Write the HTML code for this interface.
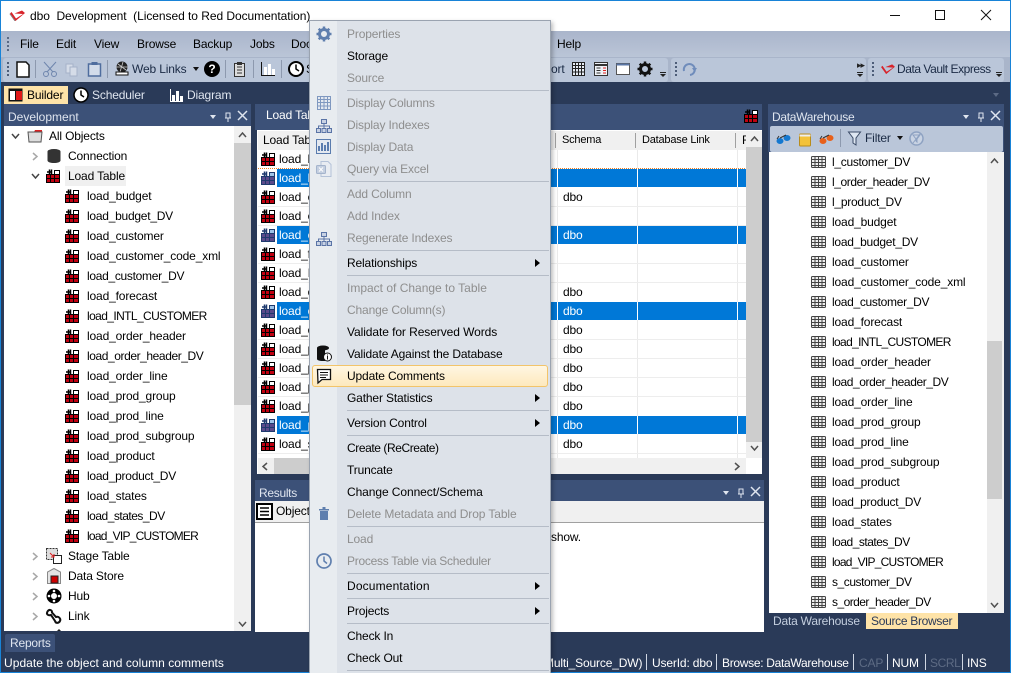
<!DOCTYPE html>
<html><head><meta charset="utf-8"><style>
html,body{margin:0;padding:0;width:1011px;height:673px;overflow:hidden}
body{background:#2a3a58;font:12px "Liberation Sans",sans-serif;color:#000;letter-spacing:-.15px}
#r{position:absolute;left:0;top:0;width:1011px;height:673px;overflow:hidden}
.b{position:absolute}
.t{position:absolute;white-space:nowrap;line-height:16px;height:16px}
svg{position:absolute;overflow:visible}
.w{color:#fff}.l{color:#dfe5ef}
.d{color:#8e8e8e}
.v{letter-spacing:-.42px}
.c{letter-spacing:-.7px}
.s{position:absolute;left:347px;width:202px;height:1px;background:#b5bcc7}
.a{position:absolute;left:535px;width:0;height:0;border-left:5px solid #000;border-top:4px solid transparent;border-bottom:4px solid transparent}
</style></head><body><div id="r">
<svg width="0" height="0" style="position:absolute"><defs>
<symbol id="lt" viewBox="0 0 14 14"><rect x="0" y="5" width="14" height="9" fill="#000"/><rect x="8" y="1" width="6" height="5" fill="#000"/><rect x="9" y="2" width="4" height="3" fill="#fff"/><path d="M1 3h4M3.500 .5v5M5.500 .5v5" stroke="#000" stroke-width="1.500" fill="none"/><path d="M1 6h3v3H1zM5 6h3v3H5zM9 6h4v3H9zM1 10h3v3H1zM5 10h3v3H5zM9 10h4v3H9z" fill="#c00010"/></symbol>
<symbol id="ls" viewBox="0 0 14 14"><rect x="0" y="5" width="14" height="9" fill="#1e3a6e"/><rect x="8" y="1" width="6" height="5" fill="#1e3a6e"/><rect x="9" y="2" width="4" height="3" fill="#9fc4e8"/><path d="M1 3h4M3.500 .5v5M5.500 .5v5" stroke="#1e3a6e" stroke-width="1.500" fill="none"/><path d="M1 6h3v3H1zM5 6h3v3H5zM9 6h4v3H9zM1 10h3v3H1zM5 10h3v3H5zM9 10h4v3H9z" fill="#5a4a8a"/></symbol>
<symbol id="tb" viewBox="0 0 15 12"><rect x=".5" y=".5" width="14" height="11" rx="1" fill="#eee" stroke="#444"/><path d="M.5 3.500h14M.5 6.500h14M.5 9.500h14M4 .5v11M7.500 .5v11M11 .5v11" stroke="#444" stroke-width="1" fill="none"/></symbol>
<symbol id="org" viewBox="0 0 16 16"><path d="M5.500 1.500h5v4h-5zM.5 10.500h4v4h-4zM6 10.500h4v4H6zM11.500 10.500h4v4h-4z" fill="#c8d2e4" stroke="#5a74a6"/><path d="M8 5.500v5M2.500 10.500V8h11v2.500" fill="none" stroke="#5a74a6"/></symbol>
</defs></svg>

<!-- window frame / title -->
<div class="b" style="left:0;top:0;width:1011px;height:31px;background:#fff"></div>
<div class="b" style="left:0;top:0;width:1011px;height:1px;background:#1883d7"></div>
<svg style="left:9px;top:9px" width="17" height="13" viewBox="0 0 17 13"><path d="M1 4.500L2.500 3 7 9.500 14 5 5.500 4.500 13 1.500 16 4 6.500 12z" fill="#d8232a"/><path d="M1 4.500L6.500 12 5.500 12 .5 5z" fill="#777"/></svg>
<div class="t" style="left:30px;top:8px;letter-spacing:-.05px">dbo&nbsp; Development&nbsp; (Licensed to Red Documentation)</div>
<div class="b" style="left:890px;top:15px;width:10px;height:1px;background:#111"></div>
<div class="b" style="left:935px;top:10px;width:8px;height:8px;border:1px solid #111"></div>
<svg style="left:981px;top:10px" width="10" height="10"><path d="M0 0l10 10M10 0L0 10" stroke="#111" stroke-width="1" fill="none"/></svg>

<!-- menu bar -->
<div class="b" style="left:1px;top:31px;width:1009px;height:26px;background:linear-gradient(#aab5cb,#bac5d7)"></div>
<div class="b" style="left:7px;top:37px;width:2px;height:14px;background:repeating-linear-gradient(#5a6a85 0 2px,transparent 2px 4px)"></div>
<div class="t" style="left:20px;top:36px">File</div>
<div class="t" style="left:56px;top:36px">Edit</div>
<div class="t" style="left:94px;top:36px">View</div>
<div class="t" style="left:137px;top:36px">Browse</div>
<div class="t" style="left:193px;top:36px">Backup</div>
<div class="t" style="left:250px;top:36px">Jobs</div>
<div class="t" style="left:291px;top:36px">Doc</div>
<div class="t" style="left:557px;top:36px">Help</div>

<!-- toolbars -->
<div class="b" style="left:1px;top:57px;width:1009px;height:25px;background:#a9b5ca"></div>
<div class="b" style="left:3px;top:58px;width:665px;height:24px;background:#bac6d9;border-radius:3px"></div>
<div class="b" style="left:671px;top:58px;width:195px;height:24px;background:#bac6d9;border-radius:3px"></div>
<div class="b" style="left:868px;top:58px;width:136px;height:24px;background:#bac6d9;border-radius:3px"></div>
<div class="b" style="left:7px;top:62px;width:2px;height:14px;background:repeating-linear-gradient(#4d5d78 0 2px,transparent 2px 4px)"></div>
<svg style="left:16px;top:61px" width="14" height="17"><path d="M1 1h9l3 3v12H1z" fill="#fff" stroke="#111" stroke-width="1.500"/></svg>
<div class="b" style="left:35px;top:60px;width:1px;height:18px;background:#8d99ae"></div>
<svg style="left:43px;top:62px" width="14" height="15"><path d="M1 0l9 10M13 0L4 10" stroke="#6f86ad" fill="none"/><circle cx="3" cy="12" r="2.500" fill="none" stroke="#6f86ad"/><circle cx="11" cy="12" r="2.500" fill="none" stroke="#6f86ad"/></svg>
<svg style="left:65px;top:63px" width="14" height="14"><path d="M1 1h7v9H1z" fill="#d5dce8" stroke="#a5b2c9"/><path d="M5 4h7v9H5z" fill="#d5dce8" stroke="#a5b2c9"/></svg>
<svg style="left:88px;top:62px" width="13" height="15"><rect x=".5" y="2" width="12" height="12" fill="#d3dcea" stroke="#4f6d9e" stroke-width="1.500"/><rect x="3.500" y="0" width="6" height="3" fill="#4f6d9e"/></svg>
<div class="b" style="left:107px;top:60px;width:1px;height:18px;background:#8d99ae"></div>
<svg style="left:115px;top:61px" width="14" height="16"><circle cx="7" cy="6" r="5.500" fill="#222"/><path d="M3 3l8 6M8 1l-3 10M1 6h12" stroke="#ccc" stroke-width=".8"/><path d="M1 11h12v3H1z" fill="#fff" stroke="#111"/></svg>
<div class="t" style="left:132px;top:61px;color:#1a2a44">Web Links</div>
<div class="b" style="left:193px;top:67px;border-top:4px solid #111;border-left:3.500px solid transparent;border-right:3.500px solid transparent"></div>
<div class="b" style="left:204px;top:61px;width:16px;height:16px;border-radius:50%;background:#000;color:#fff;font:bold 12px/16px 'Liberation Sans';text-align:center;letter-spacing:0">?</div>
<div class="b" style="left:225px;top:60px;width:1px;height:18px;background:#8d99ae"></div>
<svg style="left:234px;top:62px" width="12" height="15"><rect x=".5" y="1.500" width="10" height="13" fill="#ddd" stroke="#333"/><path d="M3 5h5M3 8h5M3 11h5" stroke="#333"/><rect x="3" y="0" width="5" height="3" fill="#333"/></svg>
<div class="b" style="left:253px;top:60px;width:1px;height:18px;background:#8d99ae"></div>
<svg style="left:261px;top:62px" width="14" height="14"><path d="M.5 0v13.500H14" stroke="#111" fill="none"/><rect x="3" y="5" width="3" height="8" fill="#fff"/><rect x="7" y="2" width="3" height="11" fill="#fff"/><rect x="11" y="7" width="3" height="6" fill="#fff"/></svg>
<div class="b" style="left:281px;top:60px;width:1px;height:18px;background:#8d99ae"></div>
<svg style="left:288px;top:61px" width="16" height="16"><circle cx="8" cy="8" r="7" fill="#fff" stroke="#000" stroke-width="2"/><path d="M8 3.500V8l3 2" stroke="#000" fill="none" stroke-width="1.500"/></svg>
<div class="t" style="left:306px;top:61px">S</div>
<div class="t" style="left:551px;top:61px;color:#1a2a44">ort</div>
<svg style="left:572px;top:62px" width="13" height="14"><path d="M.5 .5h12v13H.5zM.5 3.500h12M.5 6.500h12M.5 10h12M3.500 .5v13M6.500 .5v13M9.500 .5v13" fill="#e8edf5" stroke="#222"/></svg>
<svg style="left:594px;top:62px" width="14" height="14"><rect x=".5" y=".5" width="13" height="13" fill="#eef1f6" stroke="#333"/><path d="M.5 3h13" stroke="#333" stroke-width="2"/><path d="M2.500 6h4M2.500 8.500h4M2.500 11h4" stroke="#333"/><path d="M9 6h3M9 8.500h3M9 11h3" stroke="#d22"/></svg>
<svg style="left:616px;top:63px" width="14" height="12"><rect x=".5" y=".5" width="13" height="11" fill="#fff" stroke="#555"/><path d="M.5 1.500h13" stroke="#5a76a6" stroke-width="2"/></svg>
<svg style="left:637px;top:61px" width="16" height="16" viewBox="0 0 16 16"><circle cx="8" cy="8" r="4.500" fill="none" stroke="#111" stroke-width="3"/><path d="M8 .5v3M8 12.500v3M.5 8h3M12.500 8h3M2.700 2.700l2.100 2.100M11.200 11.200l2.100 2.100M13.300 2.700l-2.100 2.100M4.800 11.200l-2.100 2.100" stroke="#111" stroke-width="2.500"/></svg>
<div class="b" style="left:660px;top:72px;width:6px;height:1px;background:#222"></div>
<div class="b" style="left:660px;top:74px;border-top:3px solid #222;border-left:3px solid transparent;border-right:3px solid transparent"></div>
<div class="b" style="left:675px;top:62px;width:2px;height:14px;background:repeating-linear-gradient(#4d5d78 0 2px,transparent 2px 4px)"></div>
<svg style="left:682px;top:62px" width="15" height="15"><path d="M2 9A5.500 5.500 0 1 1 8 13" fill="none" stroke="#6f8cbb" stroke-width="2"/><path d="M10 6h5l-2.500 4z" fill="#6f8cbb"/></svg>
<div class="b" style="left:857px;top:60px;color:#222;font-size:9px;line-height:10px;letter-spacing:-1px">▸▸</div>
<div class="b" style="left:857px;top:72px;width:6px;height:1px;background:#222"></div>
<div class="b" style="left:857px;top:74px;border-top:3px solid #222;border-left:3px solid transparent;border-right:3px solid transparent"></div>
<div class="b" style="left:872px;top:62px;width:2px;height:14px;background:repeating-linear-gradient(#4d5d78 0 2px,transparent 2px 4px)"></div>
<svg style="left:880px;top:63px" width="16" height="12" viewBox="0 0 17 13"><path d="M1 4.500L2.500 3 7 9.500 14 5 5.500 4.500 13 1.500 16 4 6.500 12z" fill="#d8232a"/></svg>
<div class="t" style="left:897px;top:61px;color:#1a2a44;letter-spacing:-.45px">Data Vault Express</div>
<div class="b" style="left:996px;top:72px;width:6px;height:1px;background:#222"></div>
<div class="b" style="left:996px;top:74px;border-top:3px solid #222;border-left:3px solid transparent;border-right:3px solid transparent"></div>

<!-- tab strip -->
<div class="b" style="left:4px;top:86px;width:64px;height:18px;background:#fee3a8"></div>
<svg style="left:8px;top:88px" width="15" height="14"><rect x=".5" y=".5" width="14" height="13" fill="#111"/><rect x="2" y="3" width="5" height="9" fill="#fff"/><rect x="8" y="3" width="6" height="9" fill="#e01818"/></svg>
<div class="t" style="left:27px;top:87px">Builder</div>
<svg style="left:73px;top:87px" width="16" height="16"><circle cx="8" cy="8" r="7" fill="#fff" stroke="#000" stroke-width="1.500"/><path d="M8 3.500V8l3 2" stroke="#000" fill="none" stroke-width="1.500"/></svg>
<div class="t l" style="left:92px;top:87px">Scheduler</div>
<svg style="left:170px;top:89px" width="13" height="13"><path d="M.5 0v12.500H13" stroke="#fff" fill="none"/><rect x="2" y="6" width="3" height="6" fill="#fff"/><rect x="6" y="2" width="3" height="10" fill="#fff"/><rect x="10" y="7" width="3" height="5" fill="#fff"/></svg>
<div class="t l" style="left:187px;top:87px">Diagram</div>
<div class="b" style="left:993px;top:93px;border-top:4px solid #5c6a85;border-left:3.500px solid transparent;border-right:3.500px solid transparent"></div>

<!-- Development panel -->
<div class="b" style="left:4px;top:104px;width:247px;height:22px;background:#3c5178"></div>
<div class="t l" style="left:8px;top:109px;letter-spacing:0">Development</div>
<div class="b" style="left:210px;top:115px;border-top:4px solid #dfe5ef;border-left:3.500px solid transparent;border-right:3.500px solid transparent"></div>
<svg style="left:224px;top:112px" width="8" height="10"><path d="M2 1h4v5H2zM1 6h6M4 6v4" stroke="#dfe5ef" fill="none"/></svg>
<svg style="left:238px;top:111px" width="9" height="9"><path d="M0 0l9 9M9 0L0 9" stroke="#dfe5ef" stroke-width="1.500"/></svg>
<div class="b" style="left:4px;top:126px;width:247px;height:505px;background:#fff"></div>
<div class="b" style="left:234px;top:126px;width:17px;height:505px;background:#f0f0f0"></div>
<div class="b" style="left:234px;top:143px;width:17px;height:262px;background:#cdcdcd"></div>
<svg style="left:238px;top:132px" width="9" height="6"><path d="M1 5l3.500-4L8 5" stroke="#505050" stroke-width="1.500" fill="none"/></svg>
<svg style="left:238px;top:621px" width="9" height="6"><path d="M1 1l3.500 4L8 1" stroke="#505050" stroke-width="1.500" fill="none"/></svg>
<svg style="left:11px;top:133px" width="9" height="6"><path d="M1 1l3.500 4L8 1" stroke="#444" stroke-width="1.500" fill="none"/></svg>
<svg style="left:27px;top:129px" width="16" height="14"><path d="M1 3h6l1-2h7v2H1z" fill="#d22"/><path d="M1 3h14l-1 10H2z" fill="#ddd" stroke="#555"/></svg>
<div class="t" style="left:49px;top:128px">All Objects</div>
<svg style="left:32px;top:152px" width="6" height="9"><path d="M1 1l4 3.500L1 8" stroke="#a8a8a8" stroke-width="1.500" fill="none"/></svg>
<svg style="left:47px;top:149px" width="14" height="14"><ellipse cx="7" cy="2.500" rx="6.500" ry="2.500" fill="#333"/><path d="M.5 2.500v9c0 1.500 3 2.500 6.500 2.500s6.500-1 6.500-2.500v-9z" fill="#333"/></svg>
<div class="t" style="left:68px;top:148px">Connection</div>
<svg style="left:31px;top:173px" width="9" height="6"><path d="M1 1l3.500 4L8 1" stroke="#444" stroke-width="1.500" fill="none"/></svg>
<div class="b" style="left:65px;top:166px;width:61px;height:20px;background:#f0f0f0"></div>
<svg style="left:46px;top:169px" width="14" height="14"><use href="#lt"/></svg>
<div class="t" style="left:68px;top:168px">Load Table</div>
<svg style="left:65px;top:189px" width="14" height="14"><use href="#lt"/></svg><div class="t" style="left:87px;top:188px">load_budget</div>
<svg style="left:65px;top:209px" width="14" height="14"><use href="#lt"/></svg><div class="t" style="left:87px;top:208px;letter-spacing:-.25px">load_budget_DV</div>
<svg style="left:65px;top:229px" width="14" height="14"><use href="#lt"/></svg><div class="t" style="left:87px;top:228px">load_customer</div>
<svg style="left:65px;top:249px" width="14" height="14"><use href="#lt"/></svg><div class="t" style="left:87px;top:248px">load_customer_code_xml</div>
<svg style="left:65px;top:269px" width="14" height="14"><use href="#lt"/></svg><div class="t" style="left:87px;top:268px;letter-spacing:-.3px">load_customer_DV</div>
<svg style="left:65px;top:289px" width="14" height="14"><use href="#lt"/></svg><div class="t" style="left:87px;top:288px">load_forecast</div>
<svg style="left:65px;top:309px" width="14" height="14"><use href="#lt"/></svg><div class="t c" style="left:87px;top:308px;letter-spacing:-.6px">load_INTL_CUSTOMER</div>
<svg style="left:65px;top:329px" width="14" height="14"><use href="#lt"/></svg><div class="t" style="left:87px;top:328px">load_order_header</div>
<svg style="left:65px;top:349px" width="14" height="14"><use href="#lt"/></svg><div class="t v" style="left:87px;top:348px">load_order_header_DV</div>
<svg style="left:65px;top:369px" width="14" height="14"><use href="#lt"/></svg><div class="t" style="left:87px;top:368px">load_order_line</div>
<svg style="left:65px;top:389px" width="14" height="14"><use href="#lt"/></svg><div class="t" style="left:87px;top:388px">load_prod_group</div>
<svg style="left:65px;top:409px" width="14" height="14"><use href="#lt"/></svg><div class="t" style="left:87px;top:408px">load_prod_line</div>
<svg style="left:65px;top:429px" width="14" height="14"><use href="#lt"/></svg><div class="t" style="left:87px;top:428px">load_prod_subgroup</div>
<svg style="left:65px;top:449px" width="14" height="14"><use href="#lt"/></svg><div class="t" style="left:87px;top:448px">load_product</div>
<svg style="left:65px;top:469px" width="14" height="14"><use href="#lt"/></svg><div class="t" style="left:87px;top:468px;letter-spacing:-.25px">load_product_DV</div>
<svg style="left:65px;top:489px" width="14" height="14"><use href="#lt"/></svg><div class="t" style="left:87px;top:488px">load_states</div>
<svg style="left:65px;top:509px" width="14" height="14"><use href="#lt"/></svg><div class="t" style="left:87px;top:508px;letter-spacing:-.5px">load_states_DV</div>
<svg style="left:65px;top:529px" width="14" height="14"><use href="#lt"/></svg><div class="t c" style="left:87px;top:528px;letter-spacing:-.75px">load_VIP_CUSTOMER</div>
<svg style="left:32px;top:552px" width="6" height="9"><path d="M1 1l4 3.500L1 8" stroke="#a8a8a8" stroke-width="1.500" fill="none"/></svg>
<svg style="left:46px;top:548px" width="16" height="16"><rect x=".5" y=".5" width="11" height="11" fill="#ddd" stroke="#333" stroke-dasharray="2 1"/><rect x="7.500" y="7.500" width="8" height="8" fill="#fff" stroke="#222"/><path d="M4 5l4 4M8 6v3H5" stroke="#d22" fill="none"/></svg>
<div class="t" style="left:68px;top:548px">Stage Table</div>
<svg style="left:32px;top:572px" width="6" height="9"><path d="M1 1l4 3.500L1 8" stroke="#a8a8a8" stroke-width="1.500" fill="none"/></svg>
<svg style="left:47px;top:568px" width="14" height="16"><path d="M.5 15.500V4L7 .5 13.500 4v11.500z" fill="#e4e4e4" stroke="#888"/><rect x="4" y="8" width="7" height="7" fill="#c00" stroke="#222"/></svg>
<div class="t" style="left:68px;top:568px">Data Store</div>
<svg style="left:32px;top:592px" width="6" height="9"><path d="M1 1l4 3.500L1 8" stroke="#a8a8a8" stroke-width="1.500" fill="none"/></svg>
<svg style="left:46px;top:588px" width="16" height="16"><circle cx="8" cy="8" r="7.500" fill="#000"/><circle cx="8" cy="8" r="3" fill="#fff"/><circle cx="8" cy="3" r="1.300" fill="#fff"/><circle cx="8" cy="13" r="1.300" fill="#fff"/><circle cx="3" cy="8" r="1.300" fill="#fff"/><circle cx="13" cy="8" r="1.300" fill="#fff"/></svg>
<div class="t" style="left:68px;top:588px">Hub</div>
<svg style="left:32px;top:612px" width="6" height="9"><path d="M1 1l4 3.500L1 8" stroke="#a8a8a8" stroke-width="1.500" fill="none"/></svg>
<svg style="left:46px;top:608px" width="16" height="16"><path d="M1.500 3.500c2-3 5-1 4.500 1L10 9c3-1 5 2 4 4s-4 3-5 0L5 7C2 8 0 6 1.500 3.500z" fill="none" stroke="#111" stroke-width="2"/></svg>
<div class="t" style="left:68px;top:608px">Link</div>
<svg style="left:56px;top:629px" width="6" height="2"><path d="M3 0l2 2H1z" fill="#222"/></svg>

<!-- Load table panel -->
<div class="b" style="left:255px;top:104px;width:507px;height:26px;background:#3c5178"></div>
<div class="t w" style="left:266px;top:107px">Load Table</div>
<svg style="left:744px;top:109px" width="14" height="14"><use href="#lt"/></svg>
<div class="b" style="left:257px;top:130px;width:505px;height:344px;background:#fff"></div>
<div class="b" style="left:258px;top:131px;width:488px;height:19px;background:#f0f0f0"></div>
<div class="t" style="left:263px;top:132px">Load Table</div>
<div class="b" style="left:555px;top:133px;width:1px;height:15px;background:#a0a0a0"></div>
<div class="t" style="left:562px;top:132px;font-size:11px;letter-spacing:-.2px">Schema</div>
<div class="b" style="left:635px;top:133px;width:1px;height:15px;background:#a0a0a0"></div>
<div class="t" style="left:642px;top:132px;font-size:11px;letter-spacing:-.2px">Database Link</div>
<div class="b" style="left:735px;top:133px;width:1px;height:15px;background:#a0a0a0"></div>
<div class="t" style="left:742px;top:132px;width:4px;overflow:hidden">F</div>
<div class="b" style="left:557px;top:150px;width:1px;height:308px;background:#eaeaea"></div>
<div class="b" style="left:637px;top:150px;width:1px;height:308px;background:#eaeaea"></div>
<div class="b" style="left:737px;top:150px;width:1px;height:308px;background:#eaeaea"></div>
<div class="b" style="left:258px;top:168px;width:488px;height:1px;background:#ededed"></div>
<div class="b" style="left:258px;top:206px;width:488px;height:1px;background:#ededed"></div>
<div class="b" style="left:258px;top:225px;width:488px;height:1px;background:#ededed"></div>
<div class="b" style="left:258px;top:263px;width:488px;height:1px;background:#ededed"></div>
<div class="b" style="left:258px;top:282px;width:488px;height:1px;background:#ededed"></div>
<div class="b" style="left:258px;top:339px;width:488px;height:1px;background:#ededed"></div>
<div class="b" style="left:258px;top:358px;width:488px;height:1px;background:#ededed"></div>
<div class="b" style="left:258px;top:377px;width:488px;height:1px;background:#ededed"></div>
<div class="b" style="left:258px;top:396px;width:488px;height:1px;background:#ededed"></div>
<div class="b" style="left:258px;top:453px;width:488px;height:1px;background:#ededed"></div>
<!-- selected rows -->
<div class="b" style="left:277px;top:169px;width:469px;height:18px;background:#0078d7"></div>
<div class="b" style="left:258px;top:168px;width:488px;height:1px;background:repeating-linear-gradient(90deg,#f08020 0 1px,#fff 1px 2px)"></div>
<div class="b" style="left:277px;top:226px;width:469px;height:18px;background:#0078d7"></div>
<div class="b" style="left:277px;top:302px;width:469px;height:18px;background:#0078d7"></div>
<div class="b" style="left:277px;top:416px;width:469px;height:18px;background:#0078d7"></div>
<div class="b" style="left:557px;top:169px;width:1px;height:18px;background:#fff"></div><div class="b" style="left:637px;top:169px;width:1px;height:18px;background:#fff"></div><div class="b" style="left:737px;top:169px;width:1px;height:18px;background:#fff"></div>
<div class="b" style="left:557px;top:226px;width:1px;height:18px;background:#fff"></div><div class="b" style="left:637px;top:226px;width:1px;height:18px;background:#fff"></div><div class="b" style="left:737px;top:226px;width:1px;height:18px;background:#fff"></div>
<div class="b" style="left:557px;top:302px;width:1px;height:18px;background:#fff"></div><div class="b" style="left:637px;top:302px;width:1px;height:18px;background:#fff"></div><div class="b" style="left:737px;top:302px;width:1px;height:18px;background:#fff"></div>
<div class="b" style="left:557px;top:416px;width:1px;height:18px;background:#fff"></div><div class="b" style="left:637px;top:416px;width:1px;height:18px;background:#fff"></div><div class="b" style="left:737px;top:416px;width:1px;height:18px;background:#fff"></div>
<svg style="left:261px;top:152px" width="14" height="14"><use href="#lt"/></svg><div class="t" style="left:279px;top:151px">load_budget</div>
<svg style="left:261px;top:171px" width="14" height="14"><use href="#ls"/></svg><div class="t w" style="left:279px;top:170px">load_budget_DV</div>
<svg style="left:261px;top:190px" width="14" height="14"><use href="#lt"/></svg><div class="t" style="left:279px;top:189px">load_customer</div>
<svg style="left:261px;top:209px" width="14" height="14"><use href="#lt"/></svg><div class="t" style="left:279px;top:208px">load_customer</div>
<svg style="left:261px;top:228px" width="14" height="14"><use href="#ls"/></svg><div class="t w" style="left:279px;top:227px">load_customer</div>
<svg style="left:261px;top:247px" width="14" height="14"><use href="#lt"/></svg><div class="t" style="left:279px;top:246px">load_forecast</div>
<svg style="left:261px;top:266px" width="14" height="14"><use href="#lt"/></svg><div class="t" style="left:279px;top:265px">load_INTL</div>
<svg style="left:261px;top:285px" width="14" height="14"><use href="#lt"/></svg><div class="t" style="left:279px;top:284px">load_order</div>
<svg style="left:261px;top:304px" width="14" height="14"><use href="#ls"/></svg><div class="t w" style="left:279px;top:303px">load_order</div>
<svg style="left:261px;top:323px" width="14" height="14"><use href="#lt"/></svg><div class="t" style="left:279px;top:322px">load_order</div>
<svg style="left:261px;top:342px" width="14" height="14"><use href="#lt"/></svg><div class="t" style="left:279px;top:341px">load_prod</div>
<svg style="left:261px;top:361px" width="14" height="14"><use href="#lt"/></svg><div class="t" style="left:279px;top:360px">load_prod</div>
<svg style="left:261px;top:380px" width="14" height="14"><use href="#lt"/></svg><div class="t" style="left:279px;top:379px">load_prod</div>
<svg style="left:261px;top:399px" width="14" height="14"><use href="#lt"/></svg><div class="t" style="left:279px;top:398px">load_prod</div>
<svg style="left:261px;top:418px" width="14" height="14"><use href="#ls"/></svg><div class="t w" style="left:279px;top:417px">load_prod</div>
<svg style="left:261px;top:437px" width="14" height="14"><use href="#lt"/></svg><div class="t" style="left:279px;top:436px">load_states</div>
<div class="t" style="left:563px;top:189px">dbo</div>
<div class="t w" style="left:563px;top:227px">dbo</div>
<div class="t" style="left:563px;top:284px">dbo</div>
<div class="t w" style="left:563px;top:303px">dbo</div>
<div class="t" style="left:563px;top:322px">dbo</div>
<div class="t" style="left:563px;top:341px">dbo</div>
<div class="t" style="left:563px;top:360px">dbo</div>
<div class="t" style="left:563px;top:379px">dbo</div>
<div class="t" style="left:563px;top:398px">dbo</div>
<div class="t w" style="left:563px;top:417px">dbo</div>
<div class="t" style="left:563px;top:436px">dbo</div>
<div class="b" style="left:746px;top:131px;width:16px;height:327px;background:#cdcdcd"></div>
<div class="b" style="left:746px;top:131px;width:16px;height:16px;background:#f0f0f0"></div>
<div class="b" style="left:746px;top:442px;width:16px;height:16px;background:#f0f0f0"></div>
<svg style="left:750px;top:136px" width="9" height="6"><path d="M1 5l3.500-4L8 5" stroke="#505050" stroke-width="1.500" fill="none"/></svg>
<svg style="left:750px;top:445px" width="9" height="6"><path d="M1 1l3.500 4L8 1" stroke="#505050" stroke-width="1.500" fill="none"/></svg>
<div class="b" style="left:258px;top:458px;width:488px;height:16px;background:#f0f0f0"></div>
<div class="b" style="left:274px;top:458px;width:220px;height:16px;background:#cdcdcd"></div>
<svg style="left:262px;top:462px" width="6" height="9"><path d="M5 1L1 4.500 5 8" stroke="#505050" stroke-width="1.500" fill="none"/></svg>
<svg style="left:734px;top:462px" width="6" height="9"><path d="M1 1l4 3.500L1 8" stroke="#505050" stroke-width="1.500" fill="none"/></svg>

<!-- Results panel -->
<div class="b" style="left:255px;top:480px;width:509px;height:21px;background:#3c5178"></div>
<div class="t l" style="left:259px;top:485px;letter-spacing:-.3px">Results</div>
<div class="b" style="left:723px;top:491px;border-top:4px solid #dfe5ef;border-left:3px solid transparent;border-right:3px solid transparent"></div>
<svg style="left:737px;top:488px" width="8" height="10"><path d="M2 1h4v5H2zM1 6h6M4 6v4" stroke="#dfe5ef" fill="none"/></svg>
<svg style="left:751px;top:487px" width="9" height="9"><path d="M0 0l9 9M9 0L0 9" stroke="#dfe5ef" stroke-width="1.500"/></svg>
<div class="b" style="left:255px;top:501px;width:509px;height:131px;background:#fff"></div>
<div class="b" style="left:255px;top:501px;width:509px;height:22px;background:#f0f0f0;border-bottom:1px solid #a0a0a0;box-sizing:border-box"></div>
<svg style="left:256px;top:503px" width="17" height="17"><rect x="1" y="1" width="15" height="15" fill="#fff" stroke="#000" stroke-width="2"/><path d="M4 5h9M4 8.500h9M4 12h9" stroke="#000" stroke-width="1.500"/></svg>
<div class="t" style="left:276px;top:503px">Object</div>
<div class="t" style="left:551px;top:529px">show.</div>

<!-- DataWarehouse panel -->
<div class="b" style="left:768px;top:104px;width:236px;height:48px;background:#3c5178"></div>
<div class="t l" style="left:772px;top:109px;letter-spacing:-.3px">DataWarehouse</div>
<div class="b" style="left:963px;top:115px;border-top:4px solid #dfe5ef;border-left:3.500px solid transparent;border-right:3.500px solid transparent"></div>
<svg style="left:977px;top:112px" width="8" height="10"><path d="M2 1h4v5H2zM1 6h6M4 6v4" stroke="#dfe5ef" fill="none"/></svg>
<svg style="left:991px;top:111px" width="9" height="9"><path d="M0 0l9 9M9 0L0 9" stroke="#dfe5ef" stroke-width="1.500"/></svg>
<div class="b" style="left:770px;top:126px;width:233px;height:26px;background:#bac6d9;border-radius:2px"></div>
<svg style="left:776px;top:133px" width="15" height="12"><ellipse cx="4" cy="8" rx="3.500" ry="3" fill="#1478d0"/><ellipse cx="11" cy="5" rx="3.500" ry="3" fill="#1478d0"/><path d="M4 5l6-3M1 6l2-3" stroke="#333"/></svg>
<svg style="left:799px;top:133px" width="12" height="14"><rect x=".5" y="1" width="11" height="12" rx="1" fill="#f3c23a" stroke="#b98c1a"/><path d="M.5 2.500h11" stroke="#eee" stroke-width="2"/></svg>
<svg style="left:819px;top:133px" width="15" height="12"><ellipse cx="4" cy="8" rx="3.500" ry="3" fill="#e8601a"/><ellipse cx="11" cy="5" rx="3.500" ry="3" fill="#e8601a"/><path d="M4 5l6-3M1 6l2-3" stroke="#333"/></svg>
<div class="b" style="left:840px;top:129px;width:1px;height:18px;background:#8d99ae"></div>
<svg style="left:848px;top:131px" width="13" height="15"><path d="M.5 1h12L8 7v7l-3-2V7z" fill="#dfe7f2" stroke="#3a4a66"/></svg>
<div class="t" style="left:865px;top:130px;color:#1a2a44">Filter</div>
<div class="b" style="left:897px;top:136px;border-top:4px solid #111;border-left:3px solid transparent;border-right:3px solid transparent"></div>
<svg style="left:909px;top:131px" width="15" height="15"><circle cx="7.500" cy="7.500" r="6.500" fill="#c9d3e3" stroke="#8ea2c2" stroke-width="1.500"/><path d="M4 4h7L8 8v3L7 10V8zM11 3l-7 9" stroke="#8ea2c2" fill="none"/></svg>
<div class="b" style="left:769px;top:152px;width:235px;height:461px;background:#fff"></div>
<div class="b" style="left:987px;top:152px;width:17px;height:461px;background:#f0f0f0"></div>
<div class="b" style="left:987px;top:341px;width:15px;height:158px;background:#cdcdcd"></div>
<svg style="left:990px;top:158px" width="9" height="6"><path d="M1 5l3.500-4L8 5" stroke="#505050" stroke-width="1.500" fill="none"/></svg>
<svg style="left:990px;top:602px" width="9" height="6"><path d="M1 1l3.500 4L8 1" stroke="#505050" stroke-width="1.500" fill="none"/></svg>
<svg style="left:811px;top:156px" width="15" height="12"><use href="#tb"/></svg><div class="t" style="left:832px;top:154px;letter-spacing:-.3px">l_customer_DV</div>
<svg style="left:811px;top:176px" width="15" height="12"><use href="#tb"/></svg><div class="t v" style="left:832px;top:174px">l_order_header_DV</div>
<svg style="left:811px;top:196px" width="15" height="12"><use href="#tb"/></svg><div class="t" style="left:832px;top:194px;letter-spacing:-.25px">l_product_DV</div>
<svg style="left:811px;top:216px" width="15" height="12"><use href="#tb"/></svg><div class="t" style="left:832px;top:214px">load_budget</div>
<svg style="left:811px;top:236px" width="15" height="12"><use href="#tb"/></svg><div class="t" style="left:832px;top:234px;letter-spacing:-.25px">load_budget_DV</div>
<svg style="left:811px;top:256px" width="15" height="12"><use href="#tb"/></svg><div class="t" style="left:832px;top:254px">load_customer</div>
<svg style="left:811px;top:276px" width="15" height="12"><use href="#tb"/></svg><div class="t" style="left:832px;top:274px">load_customer_code_xml</div>
<svg style="left:811px;top:296px" width="15" height="12"><use href="#tb"/></svg><div class="t" style="left:832px;top:294px;letter-spacing:-.3px">load_customer_DV</div>
<svg style="left:811px;top:316px" width="15" height="12"><use href="#tb"/></svg><div class="t" style="left:832px;top:314px">load_forecast</div>
<svg style="left:811px;top:336px" width="15" height="12"><use href="#tb"/></svg><div class="t" style="left:832px;top:334px;letter-spacing:-.65px">load_INTL_CUSTOMER</div>
<svg style="left:811px;top:356px" width="15" height="12"><use href="#tb"/></svg><div class="t" style="left:832px;top:354px">load_order_header</div>
<svg style="left:811px;top:376px" width="15" height="12"><use href="#tb"/></svg><div class="t v" style="left:832px;top:374px">load_order_header_DV</div>
<svg style="left:811px;top:396px" width="15" height="12"><use href="#tb"/></svg><div class="t" style="left:832px;top:394px">load_order_line</div>
<svg style="left:811px;top:416px" width="15" height="12"><use href="#tb"/></svg><div class="t" style="left:832px;top:414px">load_prod_group</div>
<svg style="left:811px;top:436px" width="15" height="12"><use href="#tb"/></svg><div class="t" style="left:832px;top:434px">load_prod_line</div>
<svg style="left:811px;top:456px" width="15" height="12"><use href="#tb"/></svg><div class="t" style="left:832px;top:454px">load_prod_subgroup</div>
<svg style="left:811px;top:476px" width="15" height="12"><use href="#tb"/></svg><div class="t" style="left:832px;top:474px">load_product</div>
<svg style="left:811px;top:496px" width="15" height="12"><use href="#tb"/></svg><div class="t" style="left:832px;top:494px;letter-spacing:-.25px">load_product_DV</div>
<svg style="left:811px;top:516px" width="15" height="12"><use href="#tb"/></svg><div class="t" style="left:832px;top:514px">load_states</div>
<svg style="left:811px;top:536px" width="15" height="12"><use href="#tb"/></svg><div class="t" style="left:832px;top:534px;letter-spacing:-.5px">load_states_DV</div>
<svg style="left:811px;top:556px" width="15" height="12"><use href="#tb"/></svg><div class="t" style="left:832px;top:554px;letter-spacing:-.75px">load_VIP_CUSTOMER</div>
<svg style="left:811px;top:576px" width="15" height="12"><use href="#tb"/></svg><div class="t" style="left:832px;top:574px;letter-spacing:-.45px">s_customer_DV</div>
<svg style="left:811px;top:596px" width="15" height="12"><use href="#tb"/></svg><div class="t" style="left:832px;top:594px;letter-spacing:-.55px">s_order_header_DV</div>
<div class="t" style="left:773px;top:613px;color:#c3cede;letter-spacing:-.2px">Data Warehouse</div>
<div class="b" style="left:866px;top:613px;width:92px;height:16px;background:#fee3a8"></div>
<div class="t" style="left:871px;top:613px;color:#2a3a58;letter-spacing:-.3px">Source Browser</div>

<!-- bottom -->
<div class="b" style="left:5px;top:634px;width:50px;height:18px;background:#3c5178;border-radius:2px 2px 0 0"></div>
<div class="t l" style="left:10px;top:635px;letter-spacing:-.2px">Reports</div>
<div class="t w" style="left:4px;top:655px;letter-spacing:.05px">Update the object and column comments</div>
<div class="t w" style="left:544px;top:655px">Multi_Source_DW)</div>
<div class="b" style="left:646px;top:654px;width:1px;height:16px;background:#cfd6e2"></div>
<div class="t w" style="left:652px;top:655px">UserId: dbo</div>
<div class="b" style="left:716px;top:654px;width:1px;height:16px;background:#cfd6e2"></div>
<div class="t w" style="left:722px;top:655px;letter-spacing:-.3px">Browse: DataWarehouse</div>
<div class="b" style="left:853px;top:654px;width:1px;height:16px;background:#cfd6e2"></div>
<div class="t" style="left:859px;top:655px;color:#5d6b84">CAP</div>
<div class="b" style="left:887px;top:654px;width:1px;height:16px;background:#cfd6e2"></div>
<div class="t w" style="left:892px;top:655px">NUM</div>
<div class="b" style="left:925px;top:654px;width:1px;height:16px;background:#cfd6e2"></div>
<div class="t" style="left:930px;top:655px;color:#5d6b84;letter-spacing:-.4px">SCRL</div>
<div class="b" style="left:962px;top:654px;width:1px;height:16px;background:#cfd6e2"></div>
<div class="t w" style="left:967px;top:655px">INS</div>
<div class="b" style="left:0;top:0;width:1px;height:673px;background:#1883d7"></div>
<div class="b" style="left:1010px;top:0;width:1px;height:673px;background:#1883d7"></div>
<div class="b" style="left:0;top:672px;width:1011px;height:1px;background:#1883d7"></div>

<!-- context menu -->
<div class="b" style="left:309px;top:20px;width:242px;height:660px;background:#dde2e9;border:1px solid #9aa3b0;box-sizing:border-box;box-shadow:2px 2px 4px rgba(0,0,0,.25)"></div>
<div class="b" style="left:310px;top:21px;width:27px;height:652px;background:#e8ecf0"></div>
<div class="b" style="left:312px;top:365px;width:236px;height:22px;box-sizing:border-box;border:1px solid #f2c46a;border-radius:3px;background:linear-gradient(#fff6e2,#fde9bd)"></div>
<svg style="left:316px;top:26px" width="16" height="16" viewBox="0 0 16 16"><circle cx="8" cy="8" r="4.500" fill="none" stroke="#5f7fae" stroke-width="3"/><path d="M8 .5v3M8 12.500v3M.5 8h3M12.500 8h3M2.700 2.700l2.100 2.100M11.200 11.200l2.100 2.100M13.300 2.700l-2.100 2.100M4.800 11.200l-2.100 2.100" stroke="#5f7fae" stroke-width="2.500"/></svg>
<svg style="left:317px;top:96px" width="14" height="14"><path d="M.5 .5h13v13H.5zM.5 3.500h13M.5 6.500h13M.5 10h13M3.500 .5v13M7 .5v13M10.500 .5v13" fill="#e4e9f0" stroke="#7f98c0"/></svg>
<svg style="left:316px;top:118px" width="16" height="16"><use href="#org"/></svg>
<svg style="left:316px;top:139px" width="15" height="15"><rect x=".5" y=".5" width="14" height="14" fill="#e4e9f0" stroke="#5a7cae"/><path d="M3 12V7M6 12V4M9 12V6M12 12V3" stroke="#5a7cae" stroke-width="2"/></svg>
<svg style="left:316px;top:161px" width="16" height="16"><path d="M5 .5h7l3 3v12H5z" fill="#e8ecf2" stroke="#b4c2d8"/><rect x=".5" y="4.500" width="9" height="8" rx="1" fill="#c4cfe0" stroke="#a4b4cc"/><path d="M3 6.500l4 4M7 6.500l-4 4" stroke="#fff"/></svg>
<svg style="left:316px;top:231px" width="16" height="16"><use href="#org"/></svg>
<svg style="left:316px;top:345px" width="16" height="17"><path d="M1 3v11c0 1 2 2 6 2h2V3z" fill="#111"/><ellipse cx="7" cy="3" rx="6" ry="2.500" fill="#111"/><circle cx="11.500" cy="12" r="4" fill="#fff" stroke="#111"/><path d="M11.500 11v3.500M11.500 9.500v1" stroke="#111"/></svg>
<svg style="left:317px;top:369px" width="14" height="15"><path d="M.5 .5h13v10H5l-4 3.500z" fill="#fff" stroke="#111" stroke-width="1.300"/><path d="M3 3.500h8M3 6h8M3 8.500h6" stroke="#111"/></svg>
<svg style="left:319px;top:507px" width="10" height="13"><path d="M0 2h10v1.500H0zM3.500 0h3v2h-3zM1 4h8v9H1z" fill="#5f7fae"/></svg>
<svg style="left:316px;top:553px" width="16" height="16"><circle cx="8" cy="8" r="7" fill="#e8ecf0" stroke="#5f7fae" stroke-width="1.700"/><path d="M8 3.500V8l3 2.500" stroke="#5f7fae" fill="none" stroke-width="1.500"/></svg>

<div class="t d" style="left:347px;top:26px">Properties</div>
<div class="t" style="left:347px;top:48px">Storage</div>
<div class="t d" style="left:347px;top:70px">Source</div>
<div class="s" style="top:90px"></div>
<div class="t d" style="left:347px;top:95px">Display Columns</div>
<div class="t d" style="left:347px;top:117px">Display Indexes</div>
<div class="t d" style="left:347px;top:139px">Display Data</div>
<div class="t d" style="left:347px;top:161px">Query via Excel</div>
<div class="s" style="top:181px"></div>
<div class="t d" style="left:347px;top:186px">Add Column</div>
<div class="t d" style="left:347px;top:208px">Add Index</div>
<div class="t d" style="left:347px;top:230px">Regenerate Indexes</div>
<div class="s" style="top:250px"></div>
<div class="t" style="left:347px;top:255px">Relationships</div><div class="a" style="top:259px"></div>
<div class="s" style="top:275px"></div>
<div class="t d" style="left:347px;top:280px;letter-spacing:0">Impact of Change to Table</div>
<div class="t d" style="left:347px;top:302px">Change Column(s)</div>
<div class="t" style="left:347px;top:324px;letter-spacing:-.08px">Validate for Reserved Words</div>
<div class="t" style="left:347px;top:346px">Validate Against the Database</div>
<div class="t" style="left:347px;top:368px">Update Comments</div>
<div class="t" style="left:347px;top:390px">Gather Statistics</div><div class="a" style="top:394px"></div>
<div class="s" style="top:410px"></div>
<div class="t" style="left:347px;top:415px">Version Control</div><div class="a" style="top:419px"></div>
<div class="s" style="top:435px"></div>
<div class="t" style="left:347px;top:440px;letter-spacing:-.42px">Create (ReCreate)</div>
<div class="t" style="left:347px;top:462px">Truncate</div>
<div class="t" style="left:347px;top:484px;letter-spacing:-.08px">Change Connect/Schema</div>
<div class="t d" style="left:347px;top:506px;letter-spacing:-.1px">Delete Metadata and Drop Table</div>
<div class="s" style="top:526px"></div>
<div class="t d" style="left:347px;top:531px">Load</div>
<div class="t d" style="left:347px;top:553px;letter-spacing:-.27px">Process Table via Scheduler</div>
<div class="s" style="top:573px"></div>
<div class="t" style="left:347px;top:578px;letter-spacing:.15px">Documentation</div><div class="a" style="top:582px"></div>
<div class="s" style="top:598px"></div>
<div class="t" style="left:347px;top:603px">Projects</div><div class="a" style="top:607px"></div>
<div class="s" style="top:623px"></div>
<div class="t" style="left:347px;top:628px">Check In</div>
<div class="t" style="left:347px;top:650px">Check Out</div>
<div class="s" style="top:670px"></div>
</div></body></html>
